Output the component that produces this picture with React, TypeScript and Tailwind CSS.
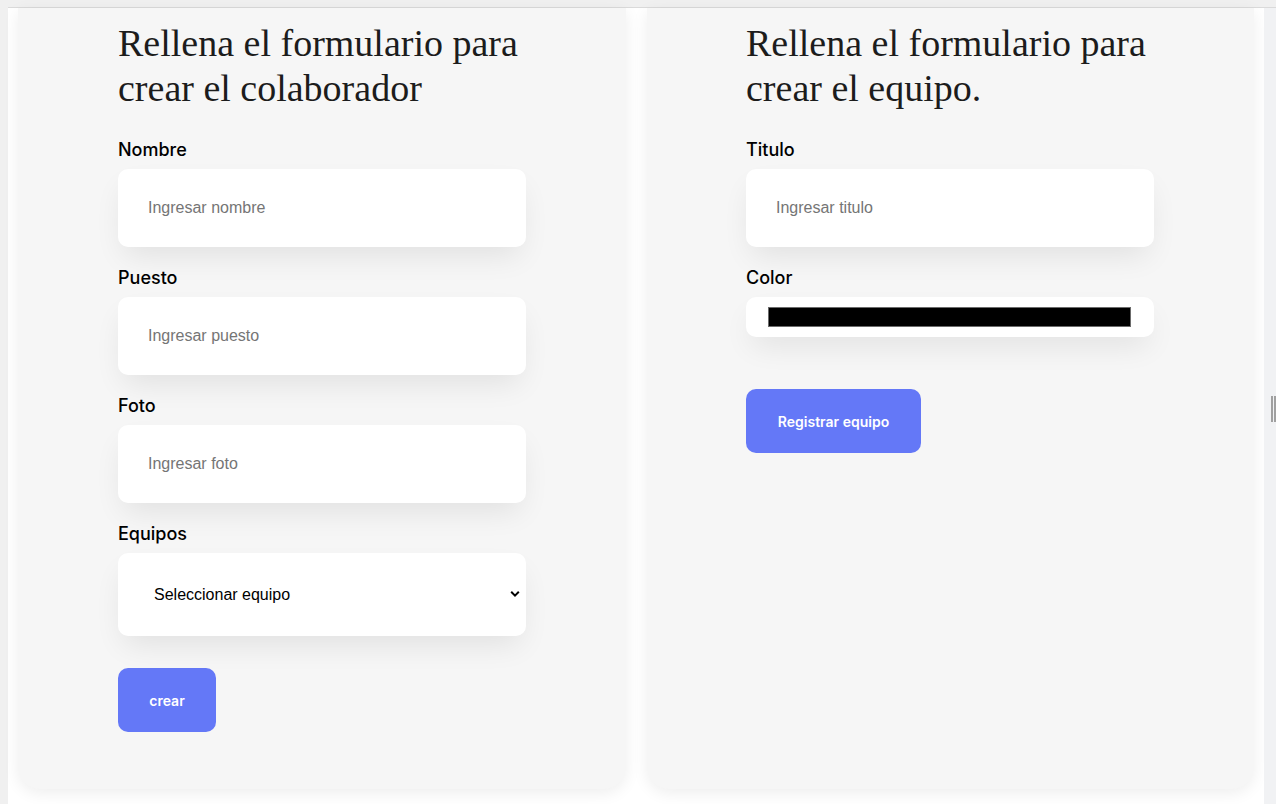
import { useState } from "react";

const campos = [
  { label: "Nombre", placeholder: "Ingresar nombre" },
  { label: "Puesto", placeholder: "Ingresar puesto" },
  { label: "Foto", placeholder: "Ingresar foto" },
];

const inputShadow = "shadow-[0_14px_30px_-6px_rgba(0,0,0,0.09)]";

function Campo({ label, placeholder }: { label: string; placeholder: string }) {
  return (
    <div className="flex flex-col">
      <label className="font-['Inter',sans-serif] text-[18px] font-medium leading-[22px] text-black">{label}</label>
      <input
        placeholder={placeholder}
        className={`mt-[8px] h-[78px] w-[408px] rounded-[10px] bg-white px-[30px] font-['Liberation_Sans',Arial,sans-serif] text-[16px] text-black outline-none placeholder:text-[#757575] ${inputShadow}`}
      />
    </div>
  );
}

function Boton({ children, className }: { children: string; className: string }) {
  return (
    <button
      className={`h-[64px] rounded-[10px] bg-[#6478f7] font-['Inter',sans-serif] text-[14px] font-semibold text-white ${className}`}
    >
      {children}
    </button>
  );
}

export default function App() {
  const [equipo, setEquipo] = useState("");

  return (
    <div className="flex h-[804px] w-[1276px] overflow-hidden bg-[#f0f0f0]">
      <div className="mt-[7px] ml-[8px] flex flex-1 flex-col border-t border-[#dadada] bg-white">
        <div className="grid grid-cols-[608px_607px] gap-[21px] pl-[10px]">
          {/* colaborador */}
          <section className="h-[781px] rounded-b-[22px] bg-[#f6f6f6] pl-[100px] pt-[13px] shadow-[0_4px_16px_rgba(0,0,0,0.07)]">
            <h2 className="font-['Liberation_Serif',serif] text-[38px] leading-[45px] text-[#1c1c1c]">
              Rellena el formulario para
              <br />
              crear el colaborador
            </h2>
            <div className="mt-[28px] flex flex-col gap-[20px]">
              {campos.map((c) => (
                <Campo key={c.label} label={c.label} placeholder={c.placeholder} />
              ))}
              <div className="flex flex-col">
                <label className="font-['Inter',sans-serif] text-[18px] font-medium leading-[22px] text-black">Equipos</label>
                <div className={`relative mt-[8px] h-[83px] w-[408px] rounded-[10px] bg-white ${inputShadow}`}>
                  <select
                    value={equipo}
                    onChange={(e) => setEquipo(e.target.value)}
                    className="h-full w-full appearance-none bg-transparent pl-[36px] font-['Liberation_Sans',Arial,sans-serif] text-[16px] text-black outline-none"
                  >
                    <option value="">Seleccionar equipo</option>
                    <option>Programación</option>
                    <option>Front End</option>
                    <option>Data Science</option>
                  </select>
                  <svg
                    className="pointer-events-none absolute right-[6px] top-[37px]"
                    width="10"
                    height="8"
                    viewBox="0 0 10 8"
                    fill="none"
                  >
                    <path d="M1.2 1.8 5 5.6 8.8 1.8" stroke="#000" strokeWidth="2" />
                  </svg>
                </div>
              </div>
            </div>
            <Boton className="mt-[32px] w-[98px]">crear</Boton>
          </section>

          {/* equipo */}
          <section className="h-[781px] rounded-b-[22px] bg-[#f6f6f6] pl-[99px] pt-[13px] shadow-[0_4px_16px_rgba(0,0,0,0.07)]">
            <h2 className="font-['Liberation_Serif',serif] text-[38px] leading-[45px] text-[#1c1c1c]">
              Rellena el formulario para
              <br />
              crear el equipo.
            </h2>
            <div className="mt-[28px] flex flex-col gap-[20px]">
              <Campo label="Titulo" placeholder="Ingresar titulo" />
              <div className="flex flex-col">
                <label className="font-['Inter',sans-serif] text-[18px] font-medium leading-[22px] text-black">Color</label>
                <div className={`mt-[8px] flex h-[40px] w-[408px] items-center rounded-[10px] bg-white pl-[22px] pr-[23px] ${inputShadow}`}>
                  <div className="h-[20px] flex-1 border border-[#6b6b6b] bg-black" />
                </div>
              </div>
            </div>
            <Boton className="mt-[52px] w-[175px]">Registrar equipo</Boton>
          </section>
        </div>
      </div>
      <div className="relative mt-[7px] w-[12px] border-t border-[#dadada] bg-[#f1f2f4]">
        <div className="absolute left-[7px] top-[388px] h-[26px] w-[2px] bg-[#a0a0a0]" />
        <div className="absolute left-[10px] top-[388px] h-[26px] w-[2px] bg-[#a0a0a0]" />
      </div>
    </div>
  );
}
